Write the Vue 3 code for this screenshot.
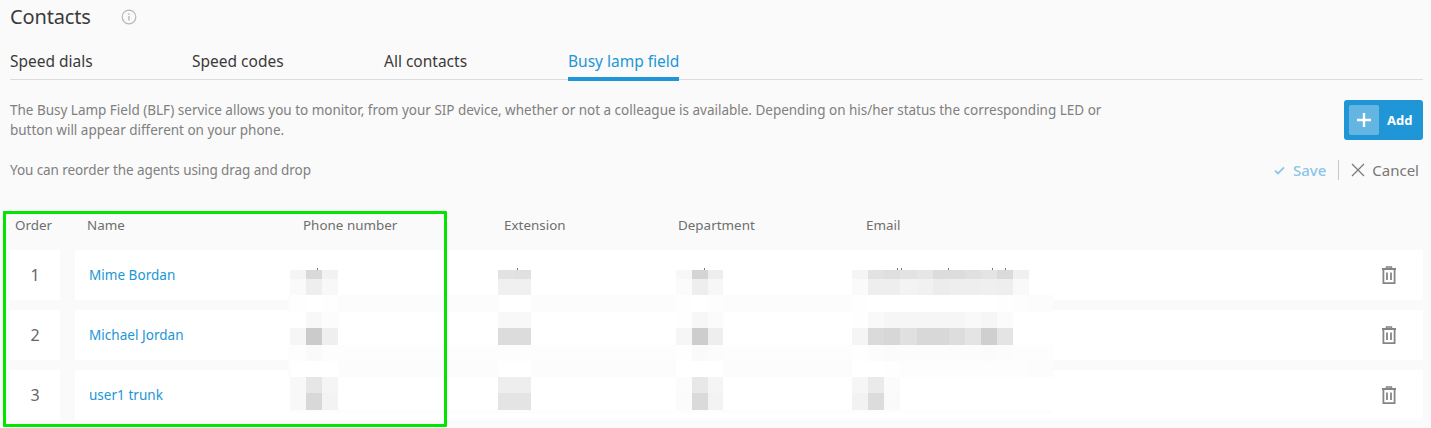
<script setup>
const tabs = ['Speed dials', 'Speed codes', 'All contacts', 'Busy lamp field']
const columns = ['Name', 'Phone number', 'Extension', 'Department', 'Email']
const contacts = [
  { order: 1, name: 'Mime Bordan' },
  { order: 2, name: 'Michael Jordan' },
  { order: 3, name: 'user1 trunk' }
]
const ys = [270, 279, 295, 312, 328, 345, 361, 377, 393, 410]
const groups = [
  { xs: [290, 306, 322, 338], rows: ['f5 d9 f2', 'fa ee f8', 'fe ff fe', 'ff f8 fc', 'f6 cb ef', 'fd fa fd', 'ff ff ff', 'f8 e6 f5', 'f8 d8 f3'] },
  { xs: [498, 515, 531], rows: ['e2 e0', 'f0 f0', 'ff ff', 'f8 f8', 'dc dc', 'fd fd', 'ff ff', 'ee ee', 'e4 e4'] },
  { xs: [676, 692, 708, 723], rows: ['f7 d4 ee', 'fb ee f7', 'fe ff fd', 'fe f7 fb', 'f6 cd ee', 'fe fa fc', 'ff ff ff', 'fc e8 f5', 'fb da f3'] },
  {
    xs: [852, 868, 884, 900, 917, 933, 949, 965, 981, 997, 1013, 1029],
    rows: [
      'f5 e2 df e3 e6 dc dc e0 e4 da f0',
      'fa ee ee f3 f1 ec ee ee ef ee f9',
      'fe ff ff ff ff ff ff ff ff fe fd',
      'fe f9 f6 f6 f6 f6 f6 f9 f6 fb ff',
      'f5 da d7 e0 d8 d8 dd e4 cf e4 ff',
      'fe fc fb fc fc fc fc fc fb fc fd',
      'ff ff fe fd fd fd fd fd fd fd fd',
      'f6 ea fb ff ff ff ff ff ff ff ff',
      'f2 dc fa ff ff ff ff ff ff ff ff'
    ]
  }
]
const bands = [
  { top: 295, height: 17, color: '#fcfcfc' },
  { top: 345, height: 16, color: '#fdfdfd' },
  { top: 361, height: 16, color: '#fcfcfc' },
  { top: 410, height: 3, color: '#fdfdfd' }
]
const specks = [317, 517, 704, 897, 901, 948, 992, 1005]
const tiles = []
for (const g of groups) {
  g.rows.forEach((r, ri) => {
    r.split(' ').forEach((c, ci) => {
      tiles.push({
        left: g.xs[ci] + 'px',
        top: ys[ri] + 'px',
        width: g.xs[ci + 1] - g.xs[ci] + 'px',
        height: ys[ri + 1] - ys[ri] + 'px',
        background: '#' + c + c + c
      })
    })
  })
}
const speckStyles = specks.map((x) => ({ left: x + 'px' }))
const bandStyles = bands.map((b) => ({
  top: b.top + 'px',
  height: b.height + 'px',
  background: b.color
}))
</script>

<template>
  <div class="page">
    <header class="title-row">
      <h1 class="title">Contacts</h1>
      <svg class="info" width="16" height="16" viewBox="0 0 16 16" fill="none">
        <circle cx="8" cy="8" r="6.8" stroke="#b4b8bb" stroke-width="1.2" />
        <rect x="7.3" y="7" width="1.4" height="4.6" fill="#b4b8bb" />
        <rect x="7.3" y="4.4" width="1.4" height="1.5" fill="#b4b8bb" />
      </svg>
    </header>

    <nav class="tabs">
      <a v-for="(t, i) in tabs" :key="t" class="tab" :class="[`tab-${i}`, { active: i === 3 }]">{{ t }}</a>
    </nav>

    <section class="intro">
      <p class="desc">
        The Busy Lamp Field (BLF) service allows you to monitor, from your SIP device, whether or not a colleague is available. Depending on his/her status the corresponding LED or<br />button will appear different on your phone.
      </p>
      <button class="add">
        <span class="plus">
          <svg width="16" height="16" viewBox="0 0 16 16"><path d="M8 1v14M1 8h14" stroke="#fff" stroke-width="2.4" /></svg>
        </span>
        <span>Add</span>
      </button>
    </section>

    <section class="hint-row">
      <p class="hint">You can reorder the agents using drag and drop</p>
      <div class="actions">
        <span class="save">
          <svg width="11" height="9" viewBox="0 0 11 9" fill="none"><path d="M1 4.6 4 7.4 10 1.4" stroke="#8cc5e9" stroke-width="1.8" /></svg>
          Save
        </span>
        <span class="sep"></span>
        <span class="cancel">
          <svg width="14" height="14" viewBox="0 0 14 14" fill="none"><path d="M1 1l12 12M13 1 1 13" stroke="#777" stroke-width="1.2" /></svg>
          Cancel
        </span>
      </div>
    </section>

    <section class="table">
      <div class="thead">
        <span class="th-order">Order</span>
        <div class="cols">
          <span v-for="c in columns" :key="c">{{ c }}</span>
        </div>
      </div>
      <div v-for="c in contacts" :key="c.order" class="row">
        <div class="order">{{ c.order }}</div>
        <div class="main">
          <a class="name">{{ c.name }}</a>
          <svg class="trash" width="16" height="19" viewBox="0 0 16 19" fill="none">
            <path d="M1 3h14" stroke="#858585" stroke-width="2" />
            <path d="M5.5 2.5V1h5v1.5" stroke="#858585" stroke-width="1.4" />
            <path d="M2.4 3v14.2h11.2V3" stroke="#858585" stroke-width="1.8" />
            <path d="M6 6.5v7.5M10 6.5v7.5" stroke="#858585" stroke-width="1.8" />
          </svg>
        </div>
      </div>
    </section>

    <div v-for="(b, i) in bandStyles" :key="'b' + i" class="band" :style="b"></div>
    <div v-for="(t, i) in tiles" :key="i" class="tile" :style="t"></div>
    <div v-for="(s, i) in speckStyles" :key="'s' + i" class="speck" :style="s"></div>
    <div class="frame"></div>
  </div>
</template>

<style>
html, body { margin: 0; background: #fafafa; }
</style>

<style scoped>
.page {
  position: relative;
  width: 1431px;
  height: 428px;
  overflow: hidden;
  box-sizing: border-box;
  padding: 0 8px 0 10px;
  background: #fafafa;
  font-family: "Noto Sans", "Open Sans", sans-serif;
  color: #666;
}
.title-row { display: flex; align-items: center; height: 35px; gap: 30px; padding-bottom: 2px; box-sizing: border-box; }
.title { margin: 0; font-size: 20px; font-weight: 400; color: #3a3a3a; letter-spacing: -0.15px; }
.tabs {
  display: flex;
  height: 45px;
  box-sizing: border-box;
  border-bottom: 1px solid #dcdcdc;
}
.tab {
  display: flex;
  align-items: center;
  height: 36px;
  padding-top: 8px;
  font-size: 15.5px;
  color: #3a3a3a;
}
.tab-0 { width: 182px; }
.tab-1 { width: 192px; }
.tab-2 { width: 184px; }
.tab.active { color: #2196d6; position: relative; }
.tab.active::after {
  content: "";
  position: absolute;
  left: 0;
  right: 0;
  bottom: -2px;
  height: 4px;
  background: #2196d6;
}
.intro { display: flex; justify-content: space-between; height: 70px; padding-top: 20px; box-sizing: border-box; }
.desc { margin: 0; font-size: 13.5px; line-height: 20px; color: #808080; letter-spacing: -0.012px; white-space: nowrap; }
.add {
  display: flex;
  align-items: center;
  gap: 8px;
  width: 79px;
  height: 40px;
  padding: 0 0 0 5px;
  box-sizing: border-box;
  border: 0;
  border-radius: 3px;
  background: #2196d6;
  color: #fff;
  font: 700 13px "Noto Sans", sans-serif;
}
.plus {
  display: flex;
  align-items: center;
  justify-content: center;
  width: 30px;
  height: 30px;
  border-radius: 2px;
  background: rgba(255, 255, 255, 0.3);
}
.hint-row { display: flex; justify-content: space-between; align-items: center; height: 40px; }
.hint { margin: 0; font-size: 13.5px; color: #808080; letter-spacing: -0.08px; }
.actions { display: flex; align-items: center; padding-right: 4px; font-size: 15px; }
.save { display: flex; align-items: center; gap: 8px; color: #8cc5e9; font-weight: 500; }
.sep { width: 1px; height: 20px; margin: 0 12px; background: #c4c8cb; }
.cancel { display: flex; align-items: center; gap: 7px; color: #777; }
.table { margin-top: 15px; }
.thead { display: flex; align-items: center; height: 45px; font-size: 13.4px; color: #6e6e6e; letter-spacing: 0.02px; padding-bottom: 6px; box-sizing: border-box; }
.th-order { width: 77px; padding-left: 5px; box-sizing: border-box; }
.cols { display: grid; grid-template-columns: 216px 201px 174px 188px 1fr; }
.row { display: flex; gap: 15px; height: 50px; margin-bottom: 10px; }
.order {
  display: flex;
  align-items: center;
  justify-content: center;
  width: 50px;
  background: #fff;
  font-size: 16px;
  color: #666;
}
.main {
  flex: 1;
  display: flex;
  align-items: center;
  justify-content: space-between;
  padding: 0 26px 0 14px;
  background: #fff;
}
.name { font-size: 13.5px; letter-spacing: 0.03px; color: #2196d6; }
.trash { display: block; }
.band { position: absolute; left: 288px; width: 765px; }
.tile { position: absolute; }
.speck { position: absolute; top: 268px; width: 1px; height: 2px; background: #777; }
.frame {
  position: absolute;
  left: 3px;
  top: 211px;
  width: 444px;
  height: 216px;
  box-sizing: border-box;
  border: 3px solid #00e600;
  border-radius: 1px;
}
</style>
